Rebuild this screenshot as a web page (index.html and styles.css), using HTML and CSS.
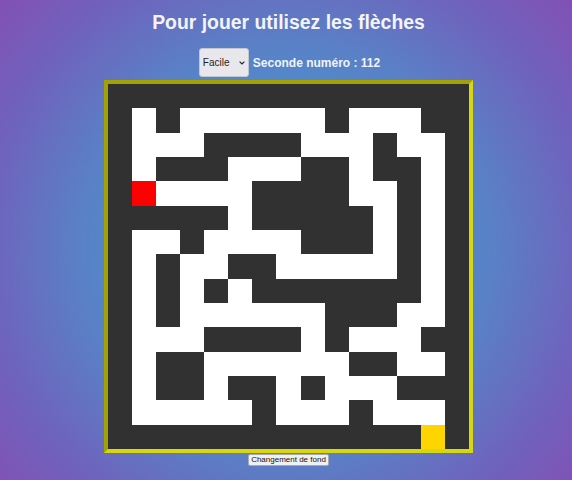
FILE: index.html
```html
<!DOCTYPE html>
<html lang="fr">
<head>
<meta charset="utf-8">
<title>Labyrinthe</title>
<link rel="stylesheet" href="styles.css">
</head>
<body>
<main class="page">
  <h1 class="title">Pour jouer utilisez les flèches</h1>
  <div class="controls">
    <span class="select-wrap">
      <select class="level">
        <option>Facile</option>
        <option>Moyen</option>
        <option>Difficile</option>
      </select>
      <svg class="chevron" width="6" height="4" viewBox="0 0 6 4"><path d="M0.6 0.6 L3 3 L5.4 0.6" fill="none" stroke="#222" stroke-width="1.1"/></svg>
    </span>
    <span class="timer">Seconde numéro : 112</span>
  </div>
  <div class="maze">
    <div class="w"></div><div class="w"></div><div class="w"></div><div class="w"></div><div class="w"></div><div class="w"></div><div class="w"></div><div class="w"></div><div class="w"></div><div class="w"></div><div class="w"></div><div class="w"></div><div class="w"></div><div class="w"></div><div class="w"></div>
    <div class="w"></div><div class="p"></div><div class="w"></div><div class="p"></div><div class="p"></div><div class="p"></div><div class="p"></div><div class="p"></div><div class="p"></div><div class="w"></div><div class="p"></div><div class="p"></div><div class="p"></div><div class="w"></div><div class="w"></div>
    <div class="w"></div><div class="p"></div><div class="p"></div><div class="p"></div><div class="w"></div><div class="w"></div><div class="w"></div><div class="w"></div><div class="p"></div><div class="p"></div><div class="p"></div><div class="w"></div><div class="p"></div><div class="p"></div><div class="w"></div>
    <div class="w"></div><div class="p"></div><div class="w"></div><div class="w"></div><div class="w"></div><div class="p"></div><div class="p"></div><div class="p"></div><div class="w"></div><div class="w"></div><div class="p"></div><div class="w"></div><div class="w"></div><div class="p"></div><div class="w"></div>
    <div class="w"></div><div class="player"></div><div class="p"></div><div class="p"></div><div class="p"></div><div class="p"></div><div class="w"></div><div class="w"></div><div class="w"></div><div class="w"></div><div class="p"></div><div class="p"></div><div class="w"></div><div class="p"></div><div class="w"></div>
    <div class="w"></div><div class="w"></div><div class="w"></div><div class="w"></div><div class="w"></div><div class="p"></div><div class="w"></div><div class="w"></div><div class="w"></div><div class="w"></div><div class="w"></div><div class="p"></div><div class="w"></div><div class="p"></div><div class="w"></div>
    <div class="w"></div><div class="p"></div><div class="p"></div><div class="w"></div><div class="p"></div><div class="p"></div><div class="p"></div><div class="p"></div><div class="w"></div><div class="w"></div><div class="w"></div><div class="p"></div><div class="w"></div><div class="p"></div><div class="w"></div>
    <div class="w"></div><div class="p"></div><div class="w"></div><div class="p"></div><div class="p"></div><div class="w"></div><div class="w"></div><div class="p"></div><div class="p"></div><div class="p"></div><div class="p"></div><div class="p"></div><div class="w"></div><div class="p"></div><div class="w"></div>
    <div class="w"></div><div class="p"></div><div class="w"></div><div class="p"></div><div class="w"></div><div class="p"></div><div class="w"></div><div class="w"></div><div class="w"></div><div class="w"></div><div class="w"></div><div class="w"></div><div class="w"></div><div class="p"></div><div class="w"></div>
    <div class="w"></div><div class="p"></div><div class="w"></div><div class="p"></div><div class="p"></div><div class="p"></div><div class="p"></div><div class="p"></div><div class="p"></div><div class="w"></div><div class="w"></div><div class="w"></div><div class="p"></div><div class="p"></div><div class="w"></div>
    <div class="w"></div><div class="p"></div><div class="p"></div><div class="p"></div><div class="w"></div><div class="w"></div><div class="w"></div><div class="w"></div><div class="p"></div><div class="w"></div><div class="p"></div><div class="p"></div><div class="p"></div><div class="w"></div><div class="w"></div>
    <div class="w"></div><div class="p"></div><div class="w"></div><div class="w"></div><div class="p"></div><div class="p"></div><div class="p"></div><div class="p"></div><div class="p"></div><div class="p"></div><div class="w"></div><div class="w"></div><div class="p"></div><div class="p"></div><div class="w"></div>
    <div class="w"></div><div class="p"></div><div class="w"></div><div class="w"></div><div class="p"></div><div class="w"></div><div class="w"></div><div class="p"></div><div class="w"></div><div class="p"></div><div class="p"></div><div class="p"></div><div class="w"></div><div class="w"></div><div class="w"></div>
    <div class="w"></div><div class="p"></div><div class="p"></div><div class="p"></div><div class="p"></div><div class="p"></div><div class="w"></div><div class="p"></div><div class="p"></div><div class="p"></div><div class="w"></div><div class="p"></div><div class="p"></div><div class="p"></div><div class="w"></div>
    <div class="w"></div><div class="w"></div><div class="w"></div><div class="w"></div><div class="w"></div><div class="w"></div><div class="w"></div><div class="w"></div><div class="w"></div><div class="w"></div><div class="w"></div><div class="w"></div><div class="w"></div><div class="goal"></div><div class="w"></div>
  </div>
  <button class="bg-button" type="button">Changement de fond</button>
</main>
</body>
</html>
```

FILE: styles.css
```css
html, body {
  margin: 0;
  height: 100%;
}

body {
  font-family: "Liberation Sans", Arial, sans-serif;
  background: radial-gradient(circle at 50% 52%, #3c9fd5 0%, #4398d1 25%, #5a80c6 55%, #6e64bd 78%, #8250b5 100%);
  overflow: hidden;
}

.page {
  display: flex;
  flex-direction: column;
  align-items: center;
  padding-left: 5px;
}

.title {
  margin: 11px 0 0;
  font-size: 19.4px;
  line-height: 22px;
  font-weight: bold;
  color: #f4f4f8;
}

.controls {
  margin-top: 15px;
  display: flex;
  align-items: center;
  gap: 4px;
  padding-left: 2px;
}

.select-wrap {
  position: relative;
  display: block;
}

.level {
  display: block;
  appearance: none;
  -webkit-appearance: none;
  width: 50px;
  height: 29px;
  margin: 0;
  padding: 0 0 0 3px;
  font-family: "Liberation Sans", Arial, sans-serif;
  font-size: 10px;
  color: #1e1e1e;
  background: #e8e8ec;
  border: 1px solid #c4c6cf;
  border-radius: 3px;
}

.chevron {
  position: absolute;
  left: 40px;
  top: 13px;
  pointer-events: none;
}

.timer {
  font-size: 12px;
  font-weight: bold;
  color: #f2f2f8;
}

.maze {
  margin-top: 3px;
  display: grid;
  grid-template-columns: repeat(15, 24.13px);
  grid-template-rows: repeat(15, 24.33px);
  border-style: solid;
  border-width: 4px;
  border-color: #a2a204 #d6d612 #d6d612 #a2a204;
  background: #313131;
}

.w {
  background: #313131;
}

.p {
  background: #ffffff;
}

.player {
  background: #ff0000;
}

.goal {
  background: #ffd500;
}

.bg-button {
  margin-top: 1px;
  height: 12px;
  padding: 0 2px;
  font-family: "Liberation Sans", Arial, sans-serif;
  font-size: 8px;
  line-height: 10px;
  color: #111;
  background: #f0f0f0;
  border: 1px solid #a9a9b0;
  border-radius: 2px;
}
```
